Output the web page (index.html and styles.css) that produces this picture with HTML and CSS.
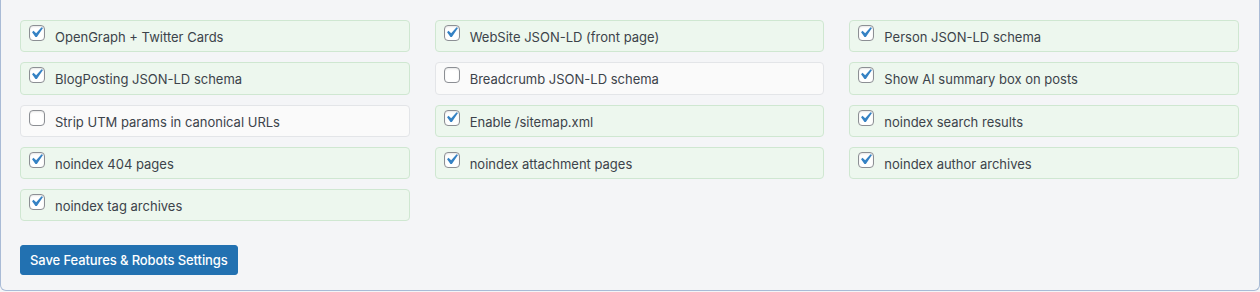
FILE: index.html
```html
<!DOCTYPE html>
<html lang="en">
<head>
    <meta charset="UTF-8">
    <meta name="viewport" content="width=device-width, initial-scale=1.0">
    <title>Features &amp; Robots</title>
    <link rel="stylesheet" href="styles.css">
</head>
<body>
    <div class="panel">
        <form class="features">
            <div class="grid">
                <label class="opt on"><span class="cb"><svg viewBox="0 0 20 20"><path d="M14.83 4.89l1.34.94-5.81 8.38H9.02L5.78 9.670l1.34-1.25 2.57 2.4z"/></svg></span><span>OpenGraph + Twitter Cards</span></label>
                <label class="opt on"><span class="cb"><svg viewBox="0 0 20 20"><path d="M14.83 4.89l1.34.94-5.81 8.38H9.02L5.78 9.67l1.34-1.25 2.57 2.4z"/></svg></span><span>WebSite JSON-LD (front page)</span></label>
                <label class="opt on"><span class="cb"><svg viewBox="0 0 20 20"><path d="M14.83 4.89l1.34.94-5.81 8.38H9.02L5.78 9.67l1.34-1.25 2.57 2.4z"/></svg></span><span>Person JSON-LD schema</span></label>

                <label class="opt on"><span class="cb"><svg viewBox="0 0 20 20"><path d="M14.83 4.89l1.34.94-5.81 8.38H9.02L5.78 9.67l1.34-1.25 2.57 2.4z"/></svg></span><span>BlogPosting JSON-LD schema</span></label>
                <label class="opt"><span class="cb"></span><span>Breadcrumb JSON-LD schema</span></label>
                <label class="opt on"><span class="cb"><svg viewBox="0 0 20 20"><path d="M14.83 4.89l1.34.94-5.81 8.38H9.02L5.78 9.67l1.34-1.25 2.57 2.4z"/></svg></span><span>Show AI summary box on posts</span></label>

                <label class="opt"><span class="cb"></span><span>Strip UTM params in canonical URLs</span></label>
                <label class="opt on"><span class="cb"><svg viewBox="0 0 20 20"><path d="M14.83 4.89l1.34.94-5.81 8.38H9.02L5.78 9.67l1.34-1.25 2.57 2.4z"/></svg></span><span>Enable /sitemap.xml</span></label>
                <label class="opt on"><span class="cb"><svg viewBox="0 0 20 20"><path d="M14.83 4.89l1.34.94-5.81 8.38H9.02L5.78 9.67l1.34-1.25 2.57 2.4z"/></svg></span><span>noindex search results</span></label>

                <label class="opt on"><span class="cb"><svg viewBox="0 0 20 20"><path d="M14.83 4.89l1.34.94-5.81 8.38H9.02L5.78 9.67l1.34-1.25 2.57 2.4z"/></svg></span><span>noindex 404 pages</span></label>
                <label class="opt on"><span class="cb"><svg viewBox="0 0 20 20"><path d="M14.83 4.89l1.34.94-5.81 8.38H9.02L5.78 9.67l1.34-1.25 2.57 2.4z"/></svg></span><span>noindex attachment pages</span></label>
                <label class="opt on"><span class="cb"><svg viewBox="0 0 20 20"><path d="M14.83 4.89l1.34.94-5.81 8.38H9.02L5.78 9.67l1.34-1.25 2.57 2.4z"/></svg></span><span>noindex author archives</span></label>

                <label class="opt on"><span class="cb"><svg viewBox="0 0 20 20"><path d="M14.83 4.89l1.34.94-5.81 8.38H9.02L5.78 9.67l1.34-1.25 2.57 2.4z"/></svg></span><span>noindex tag archives</span></label>
            </div>

            <button type="button" class="button-primary">Save Features &amp; Robots Settings</button>
        </form>
    </div>
</body>
</html>
```

FILE: styles.css
```css
/* 全体 */
body {
    margin: 0;
    font-family: Inter, "Liberation Sans", Arial, sans-serif;
    font-size: 13px;
    color: #3c434a;
    background-color: #f4f5f7;
}

/* カード */
.panel {
    height: 291px;
    box-sizing: border-box;
    background-color: #f4f5f7;
    border: 1px solid #a9bbd6;
    border-top: none;
    border-radius: 0 0 6px 6px;
    padding: 20px 20px 0 19px;
}

/* チェックボックスの並び */
.grid {
    display: grid;
    grid-template-columns: repeat(3, 1fr);
    gap: 10px 25px;
}

.opt {
    display: flex;
    align-items: flex-start;
    gap: 10px;
    height: 32.3px;
    box-sizing: border-box;
    padding: 6px 8px 5px;
    line-height: 20px;
    background-color: #fafafa;
    border: 1px solid #e3e5e8;
    border-radius: 4px;
}

.opt.on {
    background-color: #edf7ee;
    border-color: #cfe7d1;
}

.cb {
    position: relative;
    flex: none;
    width: 16px;
    height: 16px;
    margin-top: -2px;
    box-sizing: border-box;
    background-color: #fff;
    border: 1px solid #8c8f94;
    border-radius: 4px;
    box-shadow: inset 0 1px 2px rgba(0, 0, 0, 0.1);
}

.cb svg {
    position: absolute;
    left: -4px;
    top: -4px;
    width: 21px;
    height: 21px;
    fill: #3582c4;
}

/* 保存ボタン */
.button-primary {
    display: block;
    margin-top: 24px;
    height: 30px;
    padding: 0 9px;
    font-family: inherit;
    font-size: 13px;
    font-weight: 500;
    letter-spacing: -0.1px;
    color: #fff;
    background-color: #2271b1;
    border: 1px solid #2271b1;
    border-radius: 3px;
    cursor: pointer;
}

.button-primary:hover {
    background-color: #135e96;
}
```
